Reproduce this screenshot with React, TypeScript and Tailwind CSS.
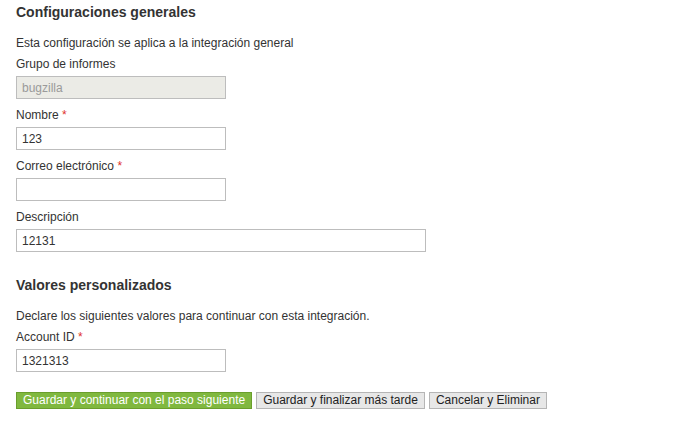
const Label = ({ text, required }: { text: string; required?: boolean }) => (
  <label className="block h-[18px] leading-[18px] mb-[3px]">
    {text}
    {required && <span className="text-[#e0322c]"> *</span>}
  </label>
);

const Field = ({
  label,
  value,
  required,
  disabled,
  wide,
}: {
  label: string;
  value: string;
  required?: boolean;
  disabled?: boolean;
  wide?: boolean;
}) => (
  <div className="mb-[7px]">
    <Label text={label} required={required} />
    <input
      readOnly
      value={value}
      className={`block h-[23px] ${wide ? "w-[410px]" : "w-[210px]"} border border-[#bdbdbd] px-[5px] text-[12px] outline-none ${
        disabled ? "bg-[#ebebe6] text-[#9a9a9a]" : "bg-white text-[#333]"
      }`}
    />
  </div>
);

export default function App() {
  return (
    <div className="min-h-screen bg-white pl-4 pt-[2px] text-[12px] text-[#333] font-['Liberation_Sans',Arial,sans-serif]">
      <h2 className="h-[20px] leading-[20px] text-[14px] font-bold text-[#333] mb-3">
        Configuraciones generales
      </h2>
      <p className="h-[18px] leading-[18px] mb-[3px]">
        Esta configuración se aplica a la integración general
      </p>
      <Field label="Grupo de informes" value="bugzilla" disabled />
      <Field label="Nombre" value="123" required />
      <Field label="Correo electrónico" value="" required />
      <Field label="Descripción" value="12131" wide />

      <h2 className="h-[20px] leading-[20px] text-[14px] font-bold text-[#333] mt-[23px] mb-3">
        Valores personalizados
      </h2>
      <p className="h-[18px] leading-[18px] mb-[3px]">
        Declare los siguientes valores para continuar con esta integración.
      </p>
      <Field label="Account ID" value="1321313" required />

      <div className="flex gap-1 mt-[20px]">
        <button className="h-[17px] leading-[15px] px-[6px] border border-[#6a9e2c] bg-[#80b83f] text-white text-[12px]">
          Guardar y continuar con el paso siguiente
        </button>
        <button className="h-[17px] leading-[15px] px-[6px] border border-[#b5b5b5] bg-[#e7e7e7] text-[#222] text-[12px]">
          Guardar y finalizar más tarde
        </button>
        <button className="h-[17px] leading-[15px] px-[6px] border border-[#b5b5b5] bg-[#e7e7e7] text-[#222] text-[12px]">
          Cancelar y Eliminar
        </button>
      </div>
    </div>
  );
}
